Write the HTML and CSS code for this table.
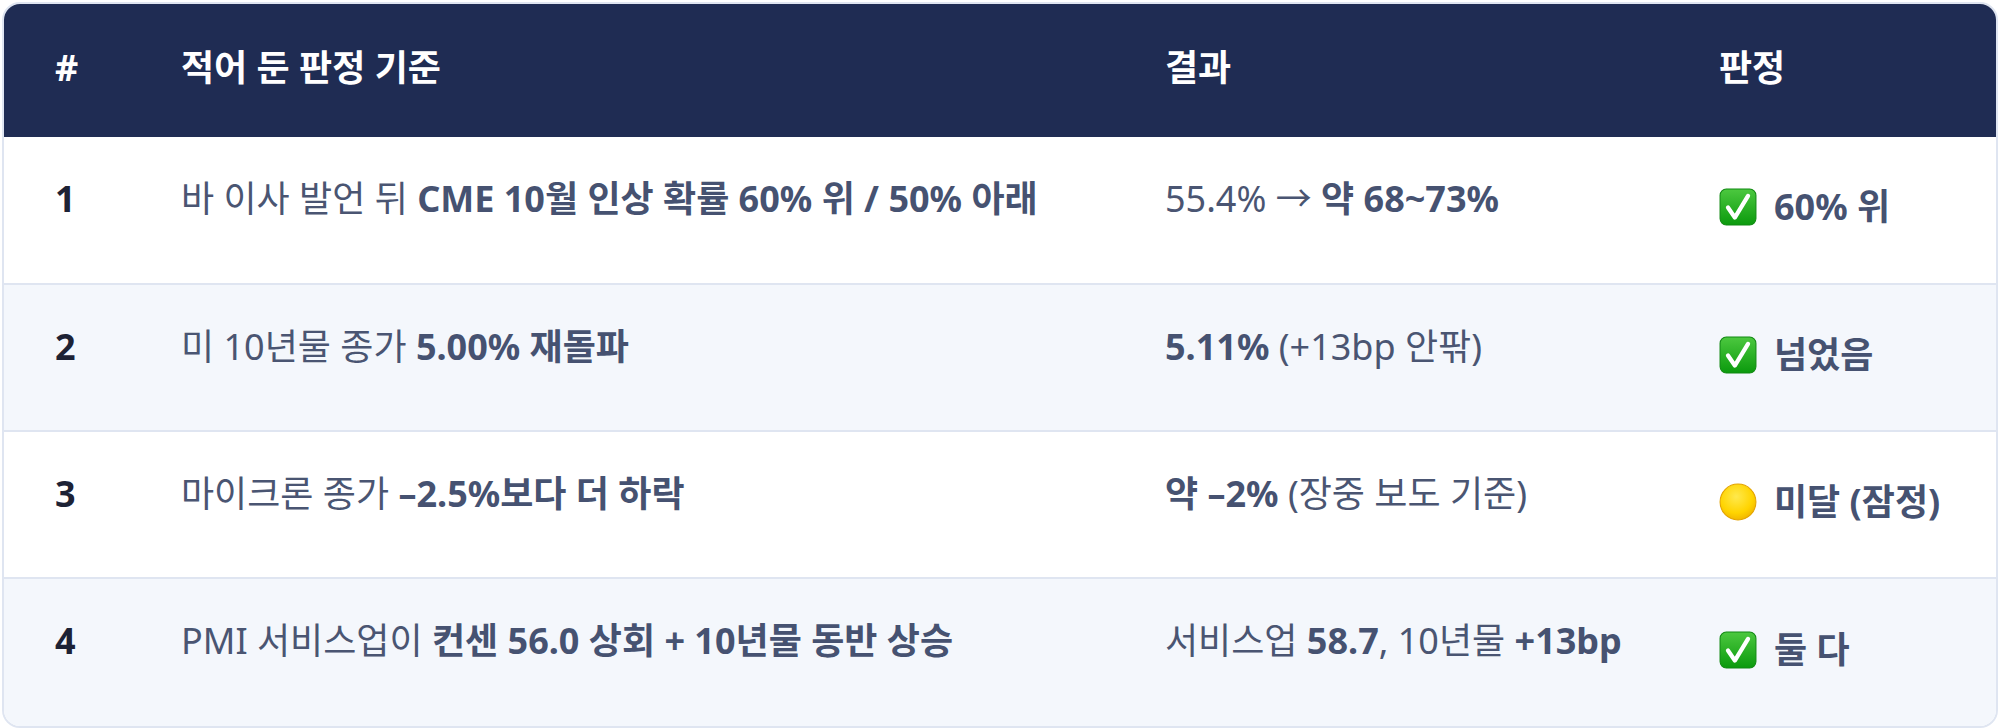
FILE: index.html
```html
<!DOCTYPE html>
<html lang="ko">
<head>
<meta charset="utf-8">
<link rel="stylesheet" href="styles.css">
</head>
<body>
<div class="card">
  <table class="grid">
    <colgroup>
      <col class="c-num"><col class="c-crit"><col class="c-res"><col class="c-judge">
    </colgroup>
    <thead>
      <tr>
        <th>#</th>
        <th>적어 둔 판정 기준</th>
        <th>결과</th>
        <th>판정</th>
      </tr>
    </thead>
    <tbody>
      <tr class="first">
        <td class="num">1</td>
        <td>바 이사 발언 뒤 <b>CME 10월 인상 확률 60% 위 / 50% 아래</b></td>
        <td>55.4% → <b>약 68~73%</b></td>
        <td class="judge"><span class="verdict"><svg class="emo" viewBox="0 0 36 36"><defs><linearGradient id="g1" x1="0" y1="0" x2="0" y2="1"><stop offset="0" stop-color="#4cc83f"/><stop offset="1" stop-color="#0b9a0d"/></linearGradient></defs><rect x="1" y="1" width="34" height="34" rx="6" fill="url(#g1)" stroke="#118a12" stroke-width="1"/><path d="M8.5 18.5 L15 28 L27.5 7.5" fill="none" stroke="#fff" stroke-width="4" stroke-linecap="round" stroke-linejoin="round"/></svg><b>60% 위</b></span></td>
      </tr>
      <tr class="alt">
        <td class="num">2</td>
        <td>미 10년물 종가 <b>5.00% 재돌파</b></td>
        <td><b>5.11%</b> (+13bp 안팎)</td>
        <td class="judge"><span class="verdict"><svg class="emo" viewBox="0 0 36 36"><rect x="1" y="1" width="34" height="34" rx="6" fill="url(#g1)" stroke="#118a12" stroke-width="1"/><path d="M8.5 18.5 L15 28 L27.5 7.5" fill="none" stroke="#fff" stroke-width="4" stroke-linecap="round" stroke-linejoin="round"/></svg><b>넘었음</b></span></td>
      </tr>
      <tr>
        <td class="num">3</td>
        <td>마이크론 종가 <b>–2.5%보다 더 하락</b></td>
        <td><b>약 –2%</b> (장중 보도 기준)</td>
        <td class="judge"><span class="verdict"><svg class="emo" viewBox="0 0 36 36"><defs><radialGradient id="g2" cx="0.45" cy="0.35" r="0.65"><stop offset="0" stop-color="#ffe94d"/><stop offset="0.7" stop-color="#ffd400"/><stop offset="1" stop-color="#f2b800"/></radialGradient></defs><circle cx="18" cy="18" r="17" fill="url(#g2)" stroke="#e3a300" stroke-width="1"/></svg><b>미달 (잠정)</b></span></td>
      </tr>
      <tr class="alt last">
        <td class="num">4</td>
        <td>PMI 서비스업이 <b>컨센 56.0 상회 + 10년물 동반 상승</b></td>
        <td>서비스업 <b>58.7</b>, 10년물 <b>+13bp</b></td>
        <td class="judge"><span class="verdict"><svg class="emo" viewBox="0 0 36 36"><rect x="1" y="1" width="34" height="34" rx="6" fill="url(#g1)" stroke="#118a12" stroke-width="1"/><path d="M8.5 18.5 L15 28 L27.5 7.5" fill="none" stroke="#fff" stroke-width="4" stroke-linecap="round" stroke-linejoin="round"/></svg><b>둘 다</b></span></td>
      </tr>
    </tbody>
  </table>
</div>
</body>
</html>
```

FILE: styles.css
```css
html, body {
  margin: 0;
  padding: 0;
  background: #ffffff;
}
body {
  font-family: "Noto Sans", "Noto Sans CJK KR", sans-serif;
  color: #4a5572;
}
.card {
  margin: 2px;
  width: 1992px;
  border: 2px solid #dfe5f1;
  border-radius: 18px;
  overflow: hidden;
}
.grid {
  width: 100%;
  border-collapse: collapse;
  table-layout: fixed;
  font-size: 36px;
  line-height: 46px;
}
.c-num { width: 126px; }
.c-crit { width: 984px; }
.c-res { width: 554px; }
.c-judge { width: auto; }
thead th {
  background: #1f2c53;
  color: #ffffff;
  font-weight: 700;
  text-align: left;
  height: 133px;
  padding: 0 0 6px 51px;
  box-sizing: border-box;
  vertical-align: middle;
}
.grid td {
  padding: 39px 20px 60px 51px;
  vertical-align: top;
  border-top: 2px solid #dfe5f1;
  white-space: nowrap;
}
.grid tr.first td { border-top: none; padding-bottom: 61px; }
.grid tr.last td { padding-bottom: 62px; }
.grid tr.alt td { background: #f4f7fc; }
td b { font-weight: 700; color: #465271; }
td.num { color: #1d2235; font-weight: 700; }
.grid tr td.judge { vertical-align: middle; padding-top: 0; padding-bottom: 0; }
.verdict {
  display: inline-flex;
  align-items: center;
  gap: 17px;
}
.emo {
  width: 38px;
  height: 38px;
  flex: none;
}
```
